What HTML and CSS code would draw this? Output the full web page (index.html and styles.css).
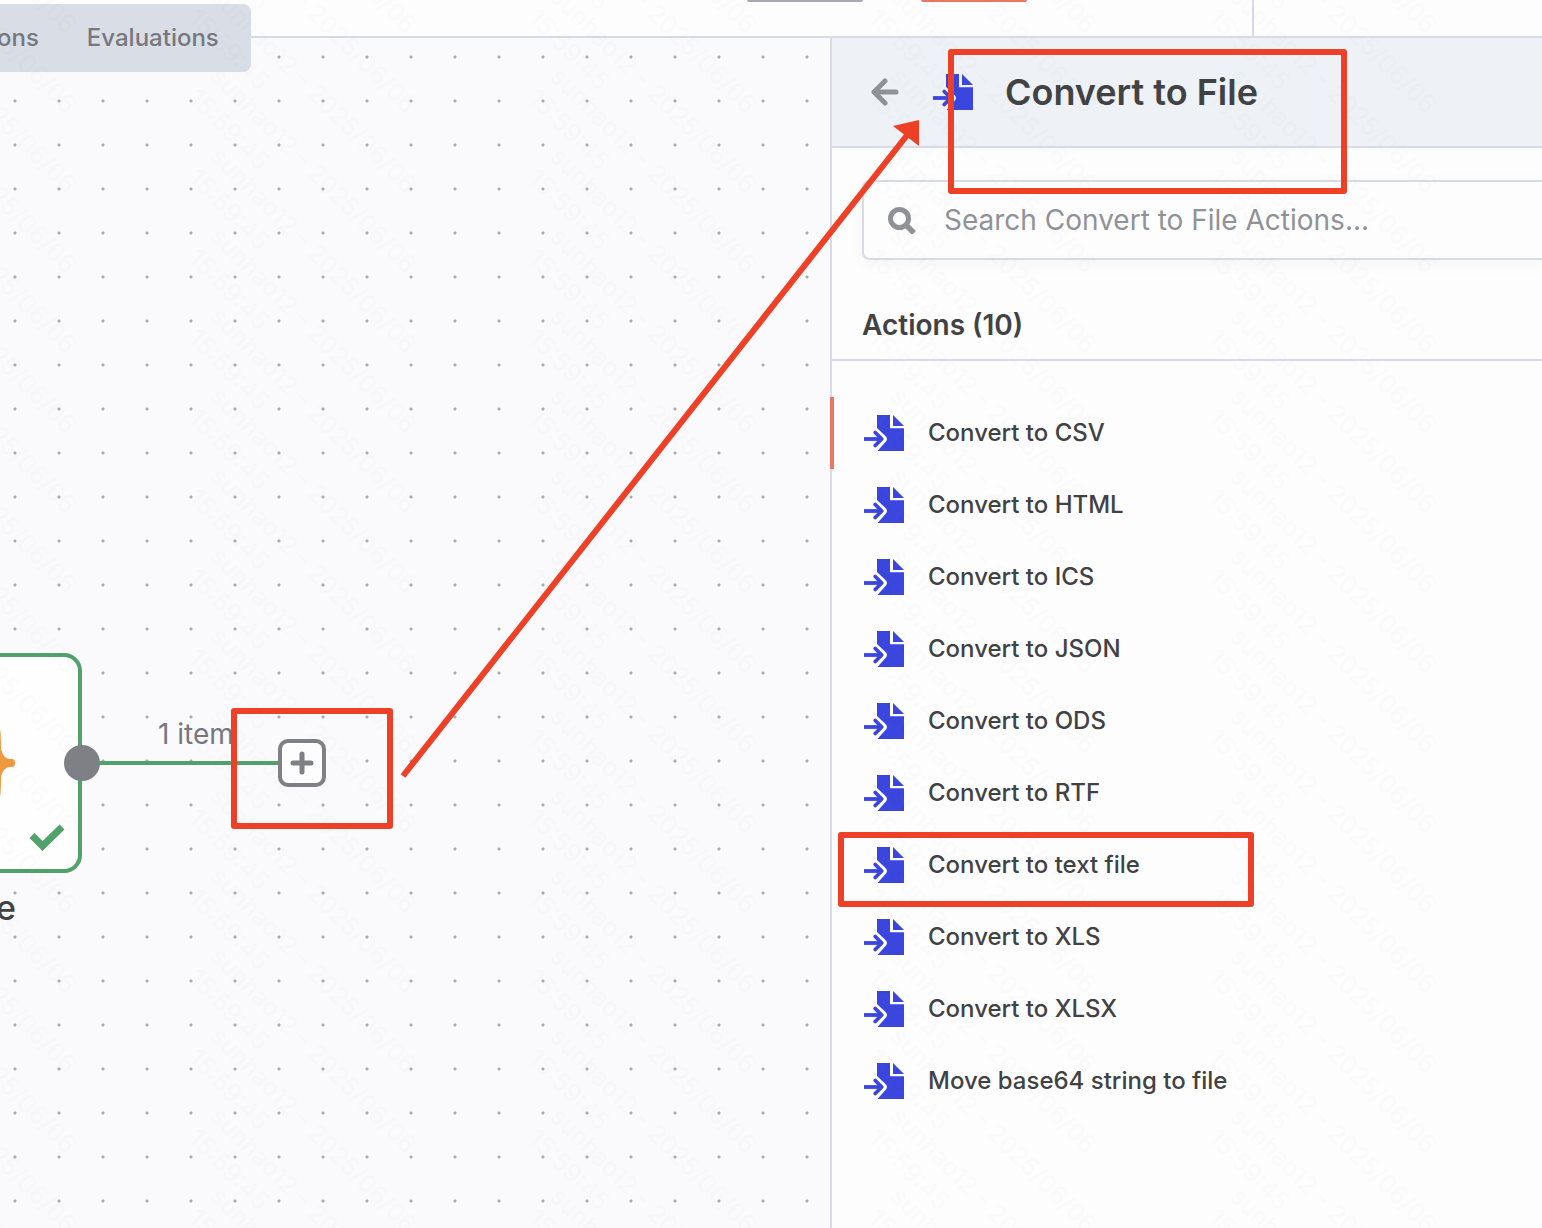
FILE: index.html
```html
<!DOCTYPE html>
<html lang="en">
<head>
<meta charset="utf-8">
<title>Convert to File</title>
<link rel="stylesheet" href="styles.css">
</head>
<body>
<svg class="sprite" aria-hidden="true">
  <symbol id="file-import" viewBox="0 0 40 36">
    <path fill="currentColor" d="M13 0H26V13.200H40V36H13.500L22 26.500Q24 24 22 21.500L13 13Z"/>
    <path fill="currentColor" d="M29 0L40 11H29Z"/>
    <path fill="none" stroke="currentColor" stroke-width="3.800" d="M0 24H17"/>
    <path fill="none" stroke="currentColor" stroke-width="3.800" stroke-linecap="round" stroke-linejoin="round" d="M11.200 17.500L17.700 24L11.200 30.500"/>
  </symbol>
</svg>

<header class="topbar">
  <nav class="tabs">
    <a class="tab" href="#executions">ons</a>
    <a class="tab" href="#evaluations">Evaluations</a>
  </nav>
  <button class="top-button share" type="button" aria-label="Share"></button>
  <button class="top-button save" type="button" aria-label="Save"></button>
  <div class="topbar-end"></div>
</header>

<main class="workspace">
  <section class="canvas" aria-label="Workflow">
    <div class="node">
      <svg class="spark" width="16" height="68" viewBox="0 0 16 68" aria-hidden="true"><path fill="#f09a40" d="M0 0Q1 4 1 20Q3 29 9 30H12Q15 30 15 34Q15 38 12 38H9Q3 39 1 48Q1 64 0 68Z"/></svg>
      <svg class="check" width="36" height="28" viewBox="0 0 36 28" aria-hidden="true"><path fill="none" stroke="#50a16a" stroke-width="7" stroke-linejoin="miter" d="M3 11.500L13.500 22L33 3"/></svg>
    </div>
    <span class="node-name">e</span>
    <span class="wire"></span>
    <span class="port"></span>
    <span class="wire-label">1 item</span>
    <button class="add" type="button" aria-label="Add node">
      <svg width="24" height="24" viewBox="0 0 24 24" aria-hidden="true"><path stroke="#7f8085" stroke-width="5" stroke-linecap="round" d="M12 3V21M3 12H21"/></svg>
    </button>
  </section>

  <aside class="panel">
    <div class="panel-head">
      <button class="back" type="button" aria-label="Back">
        <svg width="30" height="28" viewBox="0 0 30 28" aria-hidden="true"><path fill="none" stroke="#909298" stroke-width="5" stroke-linecap="round" stroke-linejoin="round" d="M15 3L4 14L15 25"/><path fill="none" stroke="#909298" stroke-width="5" stroke-linecap="round" d="M5 14H26"/></svg>
      </button>
      <svg class="file-icon" aria-hidden="true"><use href="#file-import"/></svg>
      <h1 class="title">Convert to File</h1>
    </div>
    <label class="search">
      <svg width="28" height="28" viewBox="0 0 28 28" aria-hidden="true"><circle cx="11.500" cy="12.500" r="9" fill="none" stroke="#909298" stroke-width="5"/><path stroke="#909298" stroke-width="5.500" d="M17.500 18.500L26 27"/></svg>
      <input class="search-input" type="text" placeholder="Search Convert to File Actions..." aria-label="Search actions">
    </label>
    <h2 class="section">Actions (10)</h2>
    <ul class="actions">
      <li><button class="action active" type="button"><svg class="file-icon" aria-hidden="true"><use href="#file-import"/></svg><span class="action-name">Convert to CSV</span></button></li>
      <li><button class="action" type="button"><svg class="file-icon" aria-hidden="true"><use href="#file-import"/></svg><span class="action-name">Convert to HTML</span></button></li>
      <li><button class="action" type="button"><svg class="file-icon" aria-hidden="true"><use href="#file-import"/></svg><span class="action-name">Convert to ICS</span></button></li>
      <li><button class="action" type="button"><svg class="file-icon" aria-hidden="true"><use href="#file-import"/></svg><span class="action-name">Convert to JSON</span></button></li>
      <li><button class="action" type="button"><svg class="file-icon" aria-hidden="true"><use href="#file-import"/></svg><span class="action-name">Convert to ODS</span></button></li>
      <li><button class="action" type="button"><svg class="file-icon" aria-hidden="true"><use href="#file-import"/></svg><span class="action-name">Convert to RTF</span></button></li>
      <li><button class="action" type="button"><svg class="file-icon" aria-hidden="true"><use href="#file-import"/></svg><span class="action-name">Convert to text file</span></button></li>
      <li><button class="action" type="button"><svg class="file-icon" aria-hidden="true"><use href="#file-import"/></svg><span class="action-name">Convert to XLS</span></button></li>
      <li><button class="action" type="button"><svg class="file-icon" aria-hidden="true"><use href="#file-import"/></svg><span class="action-name">Convert to XLSX</span></button></li>
      <li><button class="action" type="button"><svg class="file-icon" aria-hidden="true"><use href="#file-import"/></svg><span class="action-name">Move base64 string to file</span></button></li>
    </ul>
  </aside>
</main>

<svg class="overlay" aria-hidden="true">
  <defs>
    <g id="stamp" class="stamp">
      <text>sunhao12 - 2025/06/06</text>
      <text y="31">15:59:45</text>
    </g>
    <pattern id="watermark" x="180" y="0" width="340" height="80" patternUnits="userSpaceOnUse">
      <use href="#stamp" transform="translate(29 78) rotate(45)"/>
      <use href="#stamp" transform="translate(29 -2) rotate(45)"/>
      <use href="#stamp" transform="translate(29 -82) rotate(45)"/>
      <use href="#stamp" transform="translate(29 -162) rotate(45)"/>
    </pattern>
  </defs>
  <rect width="100%" height="100%" fill="url(#watermark)"/>
  <g fill="none" stroke="#ed4026" stroke-width="6" stroke-linejoin="round">
    <rect x="951" y="52" width="393" height="139"/>
    <rect x="234" y="711" width="156" height="115"/>
    <rect x="841" y="835" width="410" height="69"/>
    <path d="M403 776L908 134"/>
  </g>
  <path fill="#ed4026" d="M919 120V146L893 126Z"/>
</svg>
</body>
</html>
```
FILE: styles.css
```css
* {
  box-sizing: border-box;
}

body {
  margin: 0;
  min-height: 100vh;
  display: flex;
  flex-direction: column;
  position: relative;
  overflow-x: hidden;
  background: #fdfdfd;
  color: #414244;
  font-family: Inter, "Liberation Sans", sans-serif;
}

button {
  margin: 0;
  padding: 0;
  border: 0;
  background: none;
  color: inherit;
  font: inherit;
}

svg {
  display: block;
  flex: none;
}

.sprite {
  position: absolute;
  width: 0;
  height: 0;
}

.topbar {
  height: 38px;
  display: flex;
  justify-content: flex-end;
  border-bottom: 2px solid #d8dbe5;
}

.tabs {
  position: absolute;
  z-index: 1;
  left: 0;
  top: 4px;
  height: 68px;
  padding: 0 32px 2px 0;
  display: flex;
  align-items: center;
  gap: 48px;
  background: #d9dde6;
  border-radius: 0 8px 8px 0;
}

.tab {
  color: #76787e;
  font-size: 24px;
  font-weight: 500;
  text-decoration: none;
}

.tab:first-child {
  margin-left: -3px;
}

.top-button {
  height: 2px;
  border-radius: 0 0 8px 8px;
}

.share {
  width: 116px;
  margin-right: 58px;
  background: #a5a8b5;
}

.save {
  width: 106px;
  margin-right: 225px;
  background: #ee7565;
}

.topbar-end {
  width: 290px;
  border-left: 2px solid #d8dbe5;
}

.workspace {
  flex: 1;
  display: flex;
}

.canvas {
  flex: 1;
  position: relative;
  overflow: hidden;
  background: #fafafc radial-gradient(circle at 22px 22px, #a9aaae 1px, transparent 2px) -7px -3px / 44px 44px;
}

.node {
  position: absolute;
  left: -138px;
  top: 615px;
  width: 220px;
  height: 220px;
  border: 4px solid #50a16a;
  border-radius: 18px;
  background: #fefefe;
}

.spark {
  position: absolute;
  right: 62px;
  top: 72px;
}

.check {
  position: absolute;
  right: 13px;
  bottom: 17px;
}

.node-name {
  position: absolute;
  left: -4px;
  top: 848px;
  font-size: 34px;
  font-weight: 500;
  line-height: 44px;
}

.wire {
  position: absolute;
  left: 82px;
  top: 723px;
  width: 197px;
  height: 4px;
  background: #50a16a;
}

.port {
  position: absolute;
  left: 64px;
  top: 707px;
  width: 36px;
  height: 36px;
  border-radius: 50%;
  background: #7f8085;
}

.wire-label {
  position: absolute;
  left: 158px;
  top: 678px;
  color: #76787e;
  font-size: 28px;
  line-height: 36px;
}

.add {
  position: absolute;
  left: 278px;
  top: 701px;
  width: 48px;
  height: 48px;
  display: flex;
  align-items: center;
  justify-content: center;
  border: 4px solid #7f8085;
  border-radius: 10px;
  background: #fdfdfd;
}

.panel {
  flex: 0 0 712px;
  border-left: 2px solid #d8dbe5;
}

.panel-head {
  height: 110px;
  padding-left: 38px;
  display: flex;
  align-items: center;
  background: #eef1f6;
  border-bottom: 2px solid #d8dbe5;
}

.file-icon {
  width: 40px;
  height: 36px;
  color: #3a46dd;
}

.panel-head .file-icon {
  margin: 0 32px 0 33px;
}

.title {
  margin: 0;
  font-size: 36px;
  font-weight: 600;
}

.search {
  height: 80px;
  margin: 32px 0 0 30px;
  padding-left: 24px;
  display: flex;
  align-items: center;
  gap: 28px;
  border: 2px solid #d8dbe5;
  border-right: 0;
  border-radius: 8px 0 0 8px;
  background: #fdfdfd;
  box-shadow: 0 4px 16px rgba(60, 60, 90, 0.04);
}

.search-input {
  flex: 1;
  min-width: 0;
  padding: 0;
  border: 0;
  outline: 0;
  background: none;
  color: #414244;
  font: 28px Inter, "Liberation Sans", sans-serif;
}

.search-input::placeholder {
  color: #909298;
  opacity: 1;
}

.section {
  margin: 0;
  padding: 48px 0 16px 30px;
  border-bottom: 2px solid #d8dbe5;
  font-size: 28px;
  font-weight: 600;
  line-height: 35px;
}

.actions {
  margin: 0;
  padding: 36px 0;
  list-style: none;
}

.action {
  position: relative;
  width: 100%;
  height: 72px;
  padding-left: 32px;
  display: flex;
  align-items: center;
  gap: 24px;
  font-size: 24px;
  font-weight: 500;
  text-align: left;
}

.action-name {
  padding-bottom: 2px;
}

.active::before {
  content: "";
  position: absolute;
  left: -2px;
  top: 0;
  width: 4px;
  height: 100%;
  background: #ee7565;
}

.overlay {
  position: absolute;
  z-index: 2;
  left: 0;
  top: 0;
  width: 100%;
  height: 100%;
  pointer-events: none;
}

.stamp {
  fill: #000;
  fill-opacity: 0.012;
  font-size: 25px;
}
```
